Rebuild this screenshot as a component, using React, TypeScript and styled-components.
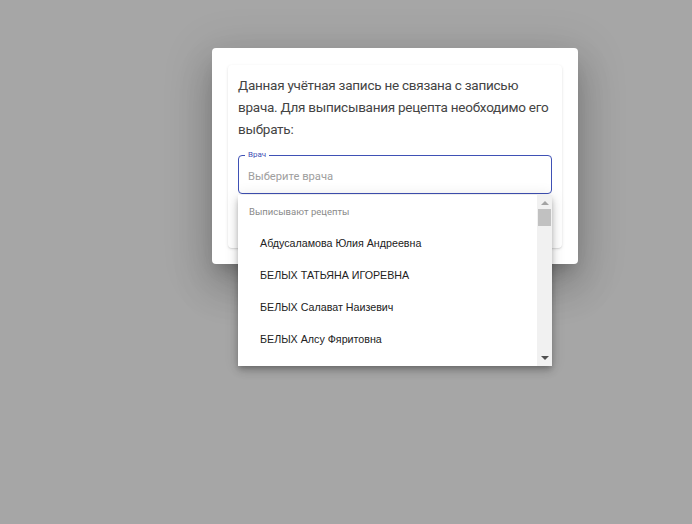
import React from 'react';
import styled, { createGlobalStyle } from 'styled-components';

const GlobalStyle = createGlobalStyle`
  html, body {
    margin: 0;
    padding: 0;
    background: #a6a6a6;
    font-family: Roboto, "Liberation Sans", Arial, sans-serif;
  }
`

const Backdrop = styled.div`
  width: 692px;
  height: 524px;
  background: #a6a6a6;
  padding: 48px 0 0 212px;
  box-sizing: border-box;
`
const Dialog = styled.div`
  width: 366px;
  box-sizing: border-box;
  padding: 17px 16px 16px;
  background: #fff;
  border-radius: 4px;
  box-shadow: 0 11px 15px -7px rgba(0,0,0,0.2), 0 24px 38px 3px rgba(0,0,0,0.14), 0 9px 46px 8px rgba(0,0,0,0.12);
`
const Card = styled.div`
  padding: 9px 10px 0;
  height: 183px;
  box-sizing: border-box;
  background: #fff;
  border-radius: 4px;
  box-shadow: 0 1px 3px 0 rgba(0,0,0,0.12), 0 1px 1px 0 rgba(0,0,0,0.06);
`
const Message = styled.p`
  margin: 0;
  font-size: 13.5px;
  letter-spacing: -0.25px;
  line-height: 22px;
  color: #444;
`
const Field = styled.div`
  position: relative;
  margin-top: 15px;
  height: 39px;
  box-sizing: border-box;
  border: 1px solid #3f51b5;
  border-radius: 4px;
  display: flex;
  align-items: center;
  padding: 0 9px;
`
const Label = styled.span`
  position: absolute;
  top: -6px;
  left: 6px;
  padding: 0 3px;
  background: #fff;
  font-size: 8px;
  line-height: 10px;
  color: #3f51b5;
`
const Placeholder = styled.span`
  margin-top: 4px;
  font-size: 11.2px;
  color: #9e9e9e;
`
const Dropdown = styled.div`
  position: absolute;
  top: 39px;
  left: -1px;
  width: 314px;
  height: 171px;
  background: #fff;
  display: flex;
  overflow: hidden;
  box-shadow: 0 3px 5px -1px rgba(0,0,0,0.2), 0 5px 8px 0 rgba(0,0,0,0.14), 0 1px 14px 0 rgba(0,0,0,0.12);
`
const List = styled.ul`
  flex: 1;
  margin: 0;
  padding: 9px 0 0;
  list-style: none;
  overflow: hidden;
`
const GroupHeader = styled.li`
  padding-left: 11px;
  height: 16px;
  line-height: 16px;
  font-size: 9.5px;
  color: #8a8a8a;
  margin-bottom: 7px;
`
const Option = styled.li`
  padding-left: 22px;
  height: 32px;
  line-height: 32px;
  font-family: "Liberation Sans", Arial, sans-serif;
  font-size: 10.7px;
  color: #222;
`
const Scrollbar = styled.div`
  width: 15px;
  background: #f1f1f1;
  display: flex;
  flex-direction: column;
  align-items: center;
`
const Arrow = styled.div<{ $down?: boolean }>`
  width: 0;
  height: 0;
  margin: ${p => (p.$down ? 'auto 0 6px' : '6px 0 0')};
  border-left: 4px solid transparent;
  border-right: 4px solid transparent;
  ${p => (p.$down ? 'border-top: 4px solid #505050;' : 'border-bottom: 4px solid #a3a3a3;')}
`
const Thumb = styled.div`
  width: 13px;
  height: 17px;
  margin-top: 4px;
  background: #c1c1c1;
`

const doctors = [
  'Абдусаламова Юлия Андреевна',
  'БЕЛЫХ ТАТЬЯНА ИГОРЕВНА',
  'БЕЛЫХ Салават Наизевич',
  'БЕЛЫХ Алсу Фяритовна',
]

export default function App() {
  return (
    <>
      <GlobalStyle />
      <Backdrop>
        <Dialog>
          <Card>
            <Message>
              Данная учётная запись не связана с записью врача. Для выписывания рецепта необходимо его выбрать:
            </Message>
            <Field>
              <Label>Врач</Label>
              <Placeholder>Выберите врача</Placeholder>
              <Dropdown>
                <List>
                  <GroupHeader>Выписывают рецепты</GroupHeader>
                  {doctors.map(d => (
                    <Option key={d}>{d}</Option>
                  ))}
                </List>
                <Scrollbar>
                  <Arrow />
                  <Thumb />
                  <Arrow $down />
                </Scrollbar>
              </Dropdown>
            </Field>
          </Card>
        </Dialog>
      </Backdrop>
    </>
  )
}
